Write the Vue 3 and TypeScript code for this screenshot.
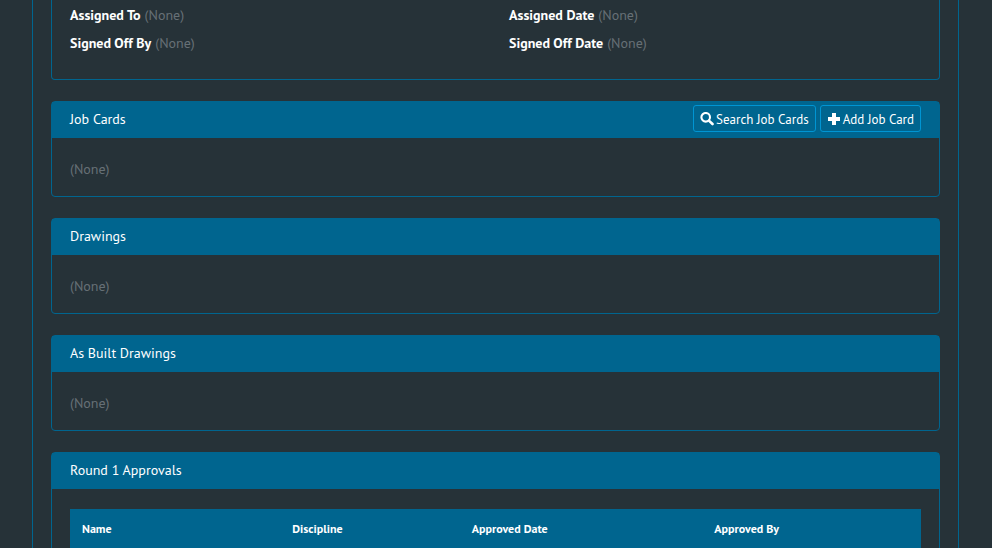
<script setup lang="ts">
interface Field {
  label: string
  value: string | null
}

interface Section {
  title: string
  actions: boolean
}

const fields: Field[] = [
  { label: 'Assigned To', value: null },
  { label: 'Assigned Date', value: null },
  { label: 'Signed Off By', value: null },
  { label: 'Signed Off Date', value: null },
]

const sections: Section[] = [
  { title: 'Job Cards', actions: true },
  { title: 'Drawings', actions: false },
  { title: 'As Built Drawings', actions: false },
]
</script>

<template>
  <div class="page">
    <main class="container">
      <section class="panel details">
        <dl class="fields">
          <div v-for="field in fields" :key="field.label" class="field">
            <dt>{{ field.label }}</dt>
            <dd class="muted">{{ field.value ?? '(None)' }}</dd>
          </div>
        </dl>
      </section>

      <section v-for="section in sections" :key="section.title" class="panel">
        <header class="heading">
          <h2>{{ section.title }}</h2>
          <div v-if="section.actions" class="actions">
            <button type="button">
              <svg width="14" height="16" viewBox="0 0 14 16" aria-hidden="true">
                <circle cx="5.7" cy="5.300" r="4.3" fill="none" stroke="currentColor" stroke-width="2.1" />
                <path d="M8.9 8.600 12.500 12" stroke="currentColor" stroke-width="2.600" stroke-linecap="round" />
              </svg>
              <span>Search Job Cards</span>
            </button>
            <button type="button">
              <svg width="14" height="16" viewBox="0 0 14 16" aria-hidden="true">
                <path d="M5 1h4v4h4v4H9v4H5V9H1V5h4z" fill="currentColor" />
              </svg>
              <span>Add Job Card</span>
            </button>
          </div>
        </header>
        <p class="empty muted">(None)</p>
      </section>

      <section class="panel">
        <header class="heading">
          <h2>Round 1 Approvals</h2>
        </header>
        <div class="table-wrap">
          <table>
            <colgroup>
              <col class="name" />
              <col class="discipline" />
              <col class="date" />
              <col />
            </colgroup>
            <thead>
              <tr>
                <th scope="col">Name</th>
                <th scope="col">Discipline</th>
                <th scope="col">Approved Date</th>
                <th scope="col">Approved By</th>
              </tr>
            </thead>
          </table>
        </div>
      </section>
    </main>
  </div>
</template>

<style>
body {
  background: #263238;
}
</style>

<style scoped>
.page {
  box-sizing: border-box;
  height: 100vh;
  overflow: hidden;
  padding: 0 33px 0 32px;
  color: #fff;
  font-family: "PT Sans", "Noto Sans", sans-serif;
  font-size: 14px;
  line-height: 20px;
}

.container {
  display: flex;
  flex-direction: column;
  gap: 21px;
  padding: 0 18px;
  border: solid #00658f;
  border-width: 0 1px;
}

.panel {
  border: 1px solid #00658f;
  border-radius: 4px;
}

.details {
  border-top: 0;
  border-radius: 0 0 4px 4px;
  padding: 1px 18px 22px;
}

.fields {
  display: grid;
  grid-template-columns: 1fr 1fr;
  column-gap: 27px;
  margin: 0;
}

.field {
  display: flex;
  gap: 4px;
  line-height: 28px;
}

dt {
  font-weight: 700;
}

dd {
  margin: 0;
}

.muted {
  color: #667076;
}

.heading {
  box-sizing: border-box;
  display: flex;
  align-items: center;
  justify-content: space-between;
  height: 36px;
  padding: 0 18px 3px;
  background: #00658f;
}

h2 {
  margin: 0;
  font-size: 14px;
  font-weight: 400;
}

.actions {
  display: flex;
  gap: 4px;
}

button {
  display: flex;
  align-items: center;
  gap: 2px;
  height: 27px;
  padding: 2px 6px 0;
  border: 1px solid #0095d3;
  border-radius: 3px;
  background: #00658f;
  color: #fff;
  font: inherit;
  font-size: 13px;
}

.empty {
  margin: 0;
  padding: 21px 18px 17px;
}

.table-wrap {
  padding: 20px 18px;
}

table {
  width: 100%;
  border-collapse: collapse;
  table-layout: fixed;
  background: #00658f;
}

.name {
  width: 24.7%;
}

.discipline {
  width: 21.1%;
}

.date {
  width: 28.5%;
}

th {
  padding: 10px 12px;
  font-size: 12px;
  font-weight: 700;
  text-align: left;
}
</style>
